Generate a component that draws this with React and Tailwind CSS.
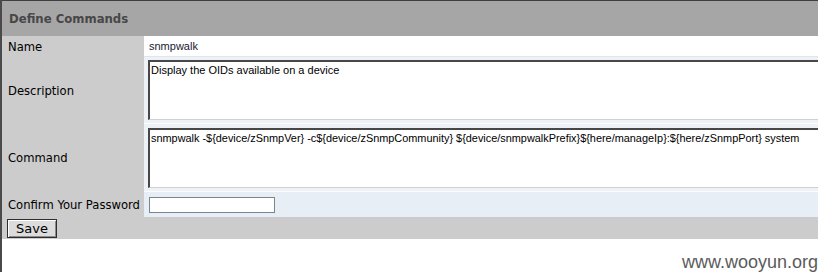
import React from 'react';

const labelCls = "bg-[#cccccc] flex items-center pl-[6px] pt-[2px] text-[11.6px] text-black font-['DejaVu_Sans',sans-serif]";

const App = () => {
  const command = 'snmpwalk -${device/zSnmpVer} -c${device/zSnmpCommunity} ${device/snmpwalkPrefix}${here/manageIp}:${here/zSnmpPort} system';

  return (
    <div className="min-h-[272px] w-[818px] overflow-hidden bg-white border-l-2 border-[#4a4a4a]">
      <div className="border-t border-[#3f3f3f]">
        {/* Header */}
        <div className="h-[35px] bg-[#a6a6a6] flex items-center pl-[7px]">
          <span className="text-[13px] font-bold text-[#474747] font-['DejaVu_Sans_Condensed','DejaVu_Sans',sans-serif]">
            Define Commands
          </span>
        </div>

        <div className="grid grid-cols-[142px_1fr]">
          {/* Name */}
          <div className={`${labelCls} h-[21px]`}>Name</div>
          <div className="h-[21px] bg-white border-b border-[#dfe5ec] flex items-center pl-[5px] text-[11px] text-[#1b1b33] font-['Liberation_Sans',sans-serif]">
            snmpwalk
          </div>

          {/* Description */}
          <div className={`${labelCls} h-[67px]`}>Description</div>
          <div className="h-[67px] bg-[#eef2f7] border-b border-[#fbfcfd] pt-[3px] pl-[4px] overflow-hidden">
            <div className="w-[720px] h-[60px] bg-white border-t-2 border-l-2 border-[#474747] border-b border-r border-b-[#d0d0d0] border-r-[#d0d0d0] px-[1px] pt-[2px] text-[11px] text-black font-['Liberation_Sans',sans-serif] leading-[13px]">
              Display the OIDs available on a device
            </div>
          </div>

          {/* Command */}
          <div className={`${labelCls} h-[68px]`}>Command</div>
          <div className="h-[68px] bg-[#eef2f7] border-b border-[#fbfcfd] pt-[4px] pl-[4px] overflow-hidden">
            <div className="w-[720px] h-[60px] bg-white border-t-2 border-l-2 border-[#474747] border-b border-r border-b-[#d0d0d0] border-r-[#d0d0d0] px-[1px] pt-[2px] text-[10.9px] text-black font-['Liberation_Sans',sans-serif] leading-[13px] whitespace-nowrap">
              {command}
            </div>
          </div>

          {/* Password */}
          <div className={`${labelCls} h-[25px]`}>Confirm Your Password</div>
          <div className="h-[25px] bg-[#e8eef6] flex items-center pl-[5px]">
            <div className="w-[126px] h-[16px] bg-white border border-[#7d848c]" />
          </div>
        </div>

        {/* Save */}
        <div className="h-[22px] bg-[#cccccc] flex items-center pl-[5px]">
          <button className="w-[50px] h-[19px] bg-[#dcdcdc] border border-[#2e2e2e] shadow-[inset_1px_1px_0_#ffffff,inset_-1px_-1px_0_#8a8a8a] text-[13px] leading-[15px] text-black font-['DejaVu_Sans',sans-serif]">
            Save
          </button>
        </div>

        {/* Watermark */}
        <div className="pt-[13px] text-right leading-[20px] text-[18px] text-[#5b5b5b] font-['Liberation_Sans',sans-serif]">
          www.wooyun.org
        </div>
      </div>
    </div>
  );
};

export default App;
